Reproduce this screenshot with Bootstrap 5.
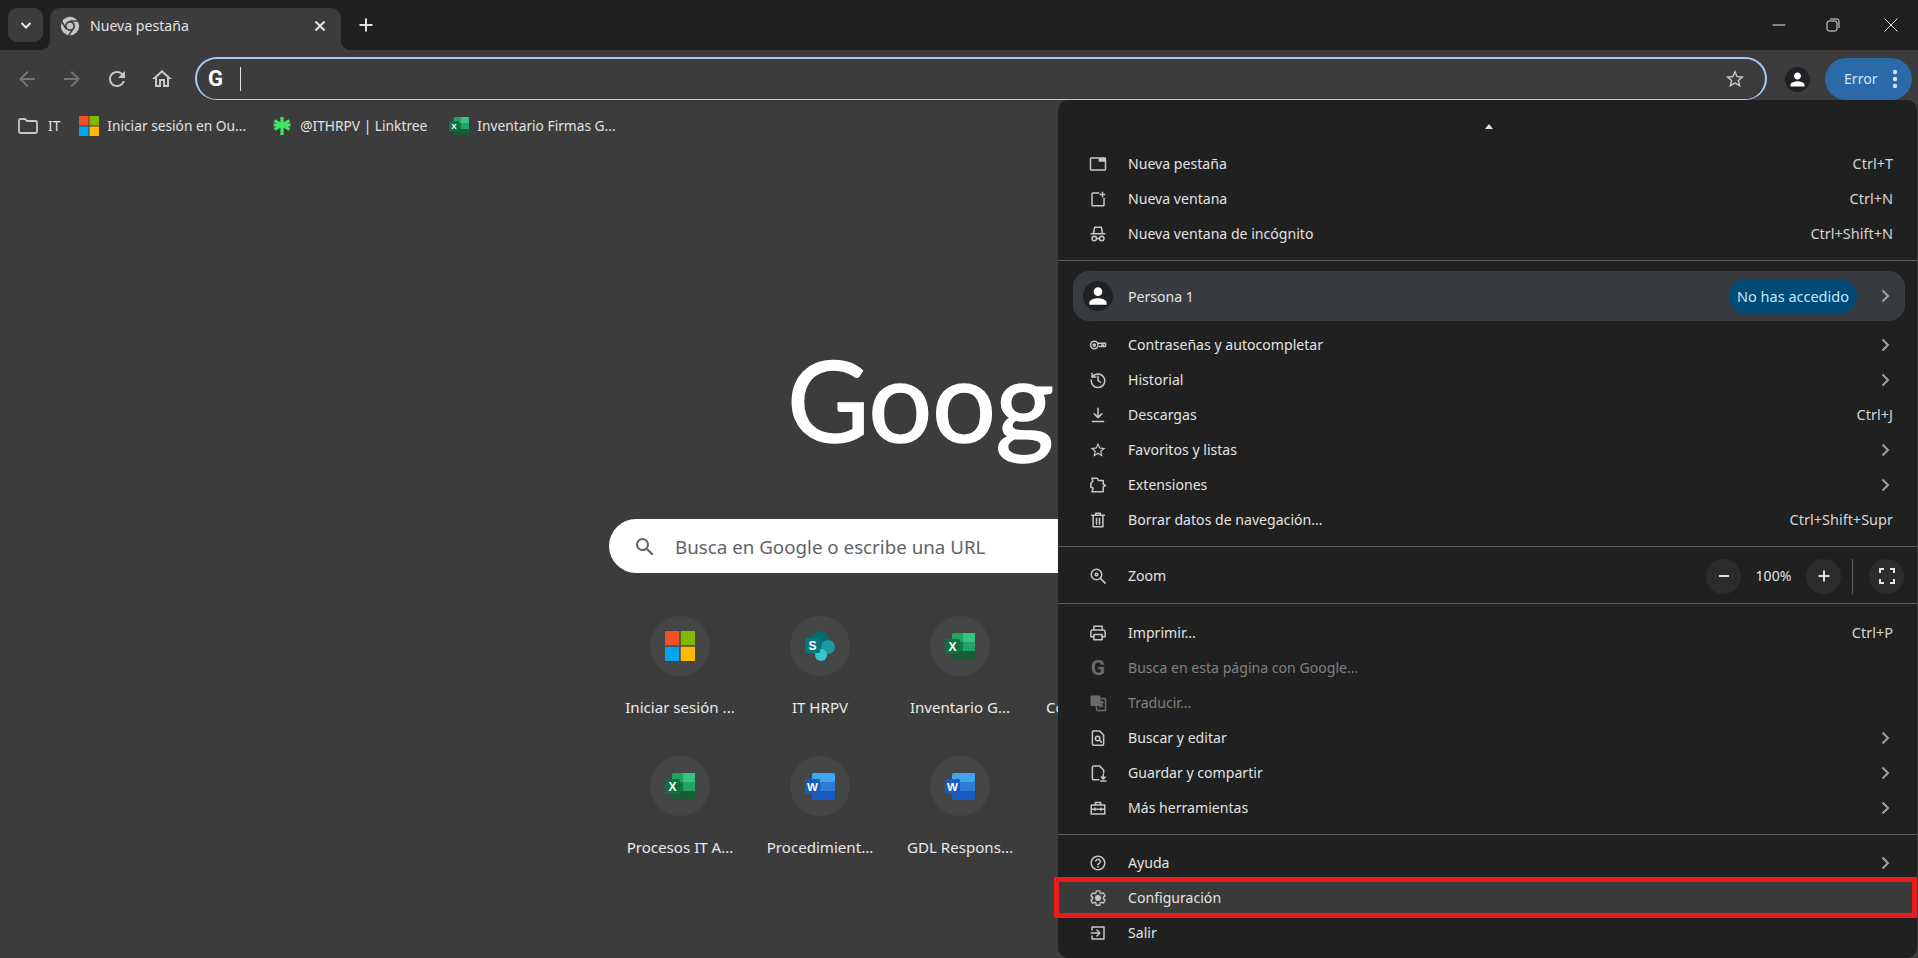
<!DOCTYPE html>
<html lang="es">

<head>
    <meta charset="UTF-8">
    <title>Nueva pestaña</title>
    <link href="https://cdn.jsdelivr.net/npm/bootstrap@5.3.0/dist/css/bootstrap.min.css" rel="stylesheet">
    <style>
        html, body { height: 958px; overflow: hidden; }
        body { background: #3c3c3c; color: #e3e3e3; font-family: "Noto Sans", "Open Sans", sans-serif; font-size: 14.1px; }

        /* window strip */
        .strip { height: 50px; background: #1f2120; }
        .tab-search { width: 35px; height: 34px; margin: 8px 7px 0 8px; background: #3c3c3c; border-radius: 9px; }
        .tab-live { width: 291px; height: 42px; margin-top: 8px; background: #3c3c3c; border-radius: 10px 10px 0 0; padding: 0 14px 7px 10px; }
        .tab-live::before, .tab-live::after { content: ""; position: absolute; bottom: 0; width: 10px; height: 10px; }
        .tab-live::before { left: -10px; background: radial-gradient(circle at 0 0, transparent 10px, #3c3c3c 10.5px); }
        .tab-live::after { right: -10px; background: radial-gradient(circle at 100% 0, transparent 10px, #3c3c3c 10.5px); }
        .tab-title { margin-left: 10px; color: #e3e3e3; }
        .tab-add { margin: 0 0 0 17px; }
        .win-ctl { width: 54px; height: 50px; }
        .win-ctl svg { stroke: #e3e3e3; fill: none; }

        /* toolbar */
        .tool-row { height: 50px; padding: 8px 6px 0 7px; border-radius: 8px 8px 0 0; background: #3c3c3c; }
        .nav-btn { width: 40px; height: 40px; margin-right: 5px; }
        .nav-btn svg { width: 24px; height: 24px; fill: #c7c7c7; }
        .nav-btn.off svg { fill: #757575; }
        .omni { flex: 0 0 1572px; margin-left: 8px; height: 43px; align-self: flex-end; border: 2.5px solid #a8c7fa; border-bottom-width: 1.5px; border-radius: 22px; padding: 0 19px 0 11px; }
        .omni-g { font-family: Roboto, sans-serif; font-weight: 700; font-size: 22px; line-height: 1; color: #fff; width: 20px; }
        .omni-caret { width: 1px; height: 24px; margin-left: 12px; background: #e3e3e3; }
        .omni-star { width: 22px; height: 22px; fill: #c7c7c7; }
        .avatar-dark { width: 25px; height: 25px; background: #202124; }
        .avatar-dark svg { width: 21px; height: 21px; fill: #fff; }
        .avatar-top { margin-left: 18px; }
        .err-chip { width: 87px; height: 42px; margin-left: 15px; align-self: flex-end; background: #2a6aa8; color: #d3e3fd; border-radius: 21px; padding: 0 14px 0 19px; }

        /* bookmarks */
        .mark-row { height: 50px; padding: 2px 0 0 18px; color: #e3e3e3; font-size: 13.75px; }
        .mark-item { margin-right: 22px; gap: 8px; white-space: nowrap; }
        .mark-item svg { width: 20px; height: 20px; flex: none; }
        .mark-item.wide-gap { gap: 10px; margin-right: 19px; }
        .mark-item.push { margin-left: 4px; }

        /* new tab page */
        .ntp { padding-top: 173px; }
        .logo-word { width: 700px; height: 150px; padding-left: 178px; line-height: 150px; font-family: Lato, sans-serif; font-size: 113px; color: #fff; -webkit-text-stroke: 1.5px #fff; letter-spacing: -.5px; }
        .box-search { width: 700px; height: 54px; margin-top: 46px; background: #fff; border-radius: 27px; padding: 2px 0 0 24px; color: #5f6368; font-size: 18.75px; }
        .box-search svg { width: 24px; height: 24px; fill: #5f6368; margin-right: 18px; }
        .tile-grid { width: 700px; margin: 43px 0 0 2px; }
        .tile { width: 140px; height: 140px; }
        .tile-disc { width: 60px; height: 60px; background: #444645; }
        .tile-label { width: 112px; margin-top: 20px; font-size: 15.1px; color: #e8eaed; white-space: nowrap; text-align: center; }
        .tile-label.cut { text-align: left; padding-left: 2px; }

        /* chrome menu */
        .cm-panel { top: 100px; right: 1px; width: 859px; height: 858px; background: #202020; border-radius: 10px; z-index: 5; }
        .cm-top { height: 46px; padding-top: 24px; }
        .cm-arrow { width: 0; height: 0; margin-left: 427px; border-left: 4px solid transparent; border-right: 4px solid transparent; border-bottom: 5px solid #e3e3e3; }
        .cm-row { height: 35px; padding: 0 24px 0 31px; }
        .cm-row > svg:first-child, .cm-glyph { width: 18px; height: 18px; flex: none; margin-right: 21px; }
        .cm-ico { fill: #c7c7c7; }
        .cm-line { fill: none; stroke: #c7c7c7; stroke-width: 2; stroke-linecap: round; stroke-linejoin: round; }
        .cm-line.dim { stroke: #6a6a6a; }
        .cm-name { flex: 1; }
        .cm-key { color: #d5d5d5; font-size: 14.5px; }
        .cm-chev { width: 16px; height: 16px; fill: none; stroke: #a0a0a0; stroke-width: 2; }
        .cm-off { color: #7f8285; }
        .cm-glyph { font-family: Roboto, sans-serif; font-weight: 700; font-size: 21px; line-height: 18px; text-align: center; color: #6a6a6a; }
        .cm-sep { height: 1px; margin: 9px 0 10px; background: #5c5c5c; }
        .cm-sep.tight { margin-bottom: 9px; }
        .cm-sep.zoomed { margin-top: 7px; margin-bottom: 11px; }
        .cm-person { height: 50px; margin: 0 12px 6px 15px; padding: 0 12px 0 10px; background: #383b40; border-radius: 16px; }
        .cm-person .avatar-dark { width: 30px; height: 30px; margin-right: 15px; }
        .cm-person .avatar-dark svg { width: 26px; height: 26px; }
        .cm-person .cm-name { padding-top: 1px; }
        .cm-pill { width: 128px; height: 35px; margin-right: 20px; background: #004a77; color: #c2e7ff; text-align: center; line-height: 35px; font-size: 14.5px; }
        .cm-zoom { height: 40px; padding: 0 13px 0 31px; }
        .cm-zoom > svg:first-child { width: 18px; height: 18px; margin-right: 21px; }
        .cm-round { width: 35px; height: 35px; background: #2c2c2c; }
        .cm-round svg { width: 20px; height: 20px; fill: none; stroke: #e3e3e3; stroke-width: 2; }
        .cm-pct { width: 65px; text-align: center; }
        .cm-vbar { width: 1px; height: 35px; margin: 0 16px 0 11px; background: #5c5c5c; }
        .cm-hot { background: #3a3a38; }
        .red-frame { top: -3px; bottom: -3px; left: -4px; right: 0; border: 5px solid #e81c1c; pointer-events: none; }
    </style>
</head>

<body class="position-relative">
    <svg class="d-none">
        <symbol id="i-person" viewBox="0 0 24 24"><path d="M12 12c2.21 0 4-1.79 4-4s-1.79-4-4-4-4 1.79-4 4 1.79 4 4 4zm0 2c-2.67 0-8 1.34-8 4v2h16v-2c0-2.66-5.33-4-8-4z" /></symbol>
        <symbol id="i-star" viewBox="0 0 24 24"><path d="M22 9.24l-7.19-.62L12 2 9.19 8.63 2 9.24l5.46 4.73L5.82 21 12 17.27 18.18 21l-1.63-7.03L22 9.24zM12 15.4l-3.76 2.27 1-4.28-3.32-2.88 4.38-.38L12 6.1l1.71 4.04 4.38.38-3.32 2.88 1 4.28L12 15.4z" /></symbol>
        <symbol id="i-chev" viewBox="0 0 16 16"><path d="M5.5 2.5 11 8l-5.5 5.5" /></symbol>
        <symbol id="i-ms" viewBox="0 0 20 20">
            <rect width="9.5" height="9.5" fill="#f25022" /><rect x="10.5" width="9.5" height="9.5" fill="#7fba00" />
            <rect y="10.5" width="9.5" height="9.5" fill="#00a4ef" /><rect x="10.5" y="10.5" width="9.5" height="9.5" fill="#ffb900" />
        </symbol>
        <symbol id="i-excel" viewBox="0 0 30 27">
            <rect x="7" width="23" height="27" rx="1.5" fill="#185c37" /><rect x="7" width="23" height="9" rx="1.5" fill="#21a366" />
            <rect x="18" width="12" height="9" fill="#33c481" /><rect x="7" y="9" width="23" height="9" fill="#107c41" />
            <rect x="18" y="9" width="12" height="9" fill="#21a366" />
            <rect y="6" width="15" height="15" rx="1.5" fill="#0f7040" />
            <text x="7.5" y="18" font-family="Liberation Sans" font-size="12" font-weight="700" fill="#fff" text-anchor="middle">X</text>
        </symbol>
        <symbol id="i-word" viewBox="0 0 30 27">
            <rect x="7" width="23" height="27" rx="1.5" fill="#103f91" /><rect x="7" width="23" height="9" rx="1.5" fill="#41a5ee" />
            <rect x="7" y="9" width="23" height="9" fill="#2b7cd3" /><rect x="7" y="18" width="23" height="9" fill="#185abd" />
            <rect y="6" width="15" height="15" rx="1.5" fill="#185abd" />
            <text x="7.5" y="18" font-family="Liberation Sans" font-size="11.5" font-weight="700" fill="#fff" text-anchor="middle">W</text>
        </symbol>
        <symbol id="i-tab" viewBox="0 0 24 24"><path d="M21 3H3c-1.1 0-2 .9-2 2v14c0 1.1.9 2 2 2h18c1.1 0 2-.9 2-2V5c0-1.1-.9-2-2-2zm0 16H3V5h10v4h8v10z" /></symbol>
        <symbol id="i-window" viewBox="0 0 24 24"><path d="M13 4H5a1 1 0 0 0-1 1v15a1 1 0 0 0 1 1h14a1 1 0 0 0 1-1v-9" /><path d="M18 3v6M15 6h6" /></symbol>
        <symbol id="i-incognito" viewBox="0 0 24 24"><path d="M3 11.5h18M6 11l1.500-8h9l1.500 8" /><circle cx="7" cy="18" r="3" /><circle cx="17" cy="18" r="3" /><path d="M10 18h4" /></symbol>
        <symbol id="i-key" viewBox="0 0 24 24"><circle cx="7" cy="12" r="5" /><circle cx="7" cy="12" r="1.500" /><path d="M12 9.500h10v4.500h-3v-2h-2v2h-3" /></symbol>
        <symbol id="i-history" viewBox="0 0 24 24"><path d="M4 3v5h5" /><path d="M4.500 8A9 9 0 1 1 3 12" /><path d="M12 7v5.500l3.500 2.500" /></symbol>
        <symbol id="i-download" viewBox="0 0 24 24"><path d="M12 3v12M7 10.500l5 5 5-5M4.500 20.500h15" /></symbol>
        <symbol id="i-puzzle" viewBox="0 0 24 24"><path d="M5 7l-1-4h7l1.500 3H19v5l3 1.500-3 2V21H4l1.500-5-3-1V10z" /></symbol>
        <symbol id="i-trash" viewBox="0 0 24 24"><path d="M3.500 5.500h17M9 5.500V3h6v2.500M5.500 5.500V21h13V5.500M10 9.500v8M14 9.500v8" /></symbol>
        <symbol id="i-zoom" viewBox="0 0 24 24"><circle cx="10" cy="10" r="7" /><circle cx="10" cy="10" r="1.800" /><path d="M15.500 15.500 21.500 21.500" /></symbol>
        <symbol id="i-print" viewBox="0 0 24 24"><path d="M6.500 8V3h11v5M6.500 17H2.500v-6.500a2.500 2.500 0 0 1 2.500-2.500h14a2.500 2.500 0 0 1 2.500 2.500V17h-4" /><path d="M6.500 14h11v7h-11z" /></symbol>
        <symbol id="i-translate" viewBox="0 0 24 24"><rect x="2" y="2" width="13" height="14" rx="1.500" fill="#6a6a6a" stroke="none" /><path d="M9 6h12a1 1 0 0 1 1 1v15H11l-1.500-5" /><path d="M13 11h6M16 9v2M18 11c-.5 3-2 5-4 6M14 12c.5 2 2.500 4 4.500 4.500" /></symbol>
        <symbol id="i-find" viewBox="0 0 24 24"><path d="M14 2.500H6a1.500 1.500 0 0 0-1.500 1.500v16A1.500 1.500 0 0 0 6 21.500h12a1.500 1.500 0 0 0 1.500-1.500V8z" /><circle cx="11.500" cy="12.500" r="3" /><path d="M14 15l2.500 2.500" /></symbol>
        <symbol id="i-save" viewBox="0 0 24 24"><path d="M13 21H6a1.500 1.500 0 0 1-1.500-1.500V4A1.500 1.500 0 0 1 6 2.500h8L19.500 8v4" /><path d="M19 14v6M16.500 17.500 19 20l2.500-2.500M15.500 22.500h7" /></symbol>
        <symbol id="i-tools" viewBox="0 0 24 24"><path d="M3 8h18v12H3zM8.500 8V4.500h7V8M3 13.500h18M8 12v3M16 12v3" /></symbol>
        <symbol id="i-help" viewBox="0 0 24 24"><path d="M11 18h2v-2h-2v2zm1-16C6.480 2 2 6.480 2 12s4.480 10 10 10 10-4.480 10-10S17.520 2 12 2zm0 18c-4.410 0-8-3.590-8-8s3.590-8 8-8 8 3.590 8 8-3.590 8-8 8zm0-14c-2.210 0-4 1.790-4 4h2c0-1.100.9-2 2-2s2 .9 2 2c0 2-3 1.750-3 5h2c0-2.250 3-2.500 3-5 0-2.210-1.790-4-4-4z" /></symbol>
        <symbol id="i-gear" viewBox="0 0 24 24"><path stroke-width="1.800" d="M19.140 12.940c.04-.3.06-.61.06-.94 0-.32-.02-.64-.07-.94l2.030-1.580c.18-.14.23-.41.12-.61l-1.920-3.320c-.12-.22-.37-.29-.59-.22l-2.390.96c-.5-.38-1.030-.7-1.620-.94l-.36-2.540c-.04-.24-.24-.41-.48-.41h-3.840c-.24 0-.43.17-.47.41l-.36 2.540c-.59.24-1.130.57-1.620.94l-2.390-.96c-.22-.08-.47 0-.59.22L2.740 8.870c-.12.21-.08.47.12.61l2.030 1.580c-.05.3-.09.63-.09.94s.02.64.07.94l-2.030 1.580c-.18.14-.23.41-.12.61l1.920 3.320c.12.22.37.29.59.22l2.390-.96c.5.38 1.030.7 1.620.94l.36 2.540c.05.24.24.41.48.41h3.840c.24 0 .44-.17.47-.41l.36-2.540c.59-.24 1.130-.56 1.620-.94l2.390.96c.22.08.47 0 .59-.22l1.920-3.320c.12-.22.07-.47-.12-.61l-2.010-1.580z" /><circle cx="12" cy="12" r="3" fill="#c7c7c7" /></symbol>
        <symbol id="i-exit" viewBox="0 0 24 24"><path d="M4 8V4h16v16H4v-4M3 12h11M10.500 8l4 4-4 4" /></symbol>
    </svg>

    <!-- window strip with the tab -->
    <div class="strip d-flex">
        <div class="tab-search d-flex align-items-center justify-content-center">
            <svg width="14" height="14" viewBox="0 0 14 14" fill="none" stroke="#e3e3e3" stroke-width="2"><path d="M2.500 5 7 9.500 11.500 5" /></svg>
        </div>
        <div class="tab-live position-relative d-flex align-items-center">
            <svg width="20" height="20" viewBox="0 0 24 24">
                <circle cx="12" cy="12" r="11" fill="#c4c7c5" />
                <circle cx="12" cy="12" r="6" fill="#3c3c3c" />
                <circle cx="12" cy="12" r="4" fill="#c4c7c5" />
                <path d="M12 6h10M7 15 2 6.500M15.500 16 10.500 23" stroke="#3c3c3c" stroke-width="1.800" fill="none" />
            </svg>
            <span class="tab-title flex-grow-1">Nueva pestaña</span>
            <svg width="14" height="14" viewBox="0 0 14 14" stroke="#e3e3e3" stroke-width="2"><path d="M2.500 2.500l9 9M11.500 2.500l-9 9" /></svg>
        </div>
        <svg class="tab-add align-self-center" width="16" height="16" viewBox="0 0 16 16" stroke="#e3e3e3" stroke-width="2"><path d="M8 1.500v13M1.500 8h13" /></svg>
        <div class="ms-auto d-flex">
            <div class="win-ctl d-flex align-items-center justify-content-center"><svg width="14" height="14" viewBox="0 0 14 14"><path d="M0.500 7h13" /></svg></div>
            <div class="win-ctl me-1 d-flex align-items-center justify-content-center"><svg width="14" height="14" viewBox="0 0 14 14"><rect x="1" y="3" width="10" height="10" rx="2" /><path d="M4 1h7a2 2 0 0 1 2 2v7" /></svg></div>
            <div class="win-ctl d-flex align-items-center justify-content-center"><svg width="14" height="14" viewBox="0 0 14 14"><path d="M.5.500l13 13M13.500.500l-13 13" /></svg></div>
        </div>
    </div>

    <!-- toolbar -->
    <div class="tool-row d-flex align-items-center">
        <div class="nav-btn off d-flex align-items-center justify-content-center"><svg viewBox="0 0 24 24"><path d="M20 11H7.830l5.590-5.590L12 4l-8 8 8 8 1.410-1.410L7.830 13H20v-2z" /></svg></div>
        <div class="nav-btn off d-flex align-items-center justify-content-center"><svg viewBox="0 0 24 24"><path d="M12 4l-1.410 1.410L16.170 11H4v2h12.170l-5.580 5.590L12 20l8-8z" /></svg></div>
        <div class="nav-btn d-flex align-items-center justify-content-center"><svg viewBox="0 0 24 24"><path d="M17.650 6.350A7.958 7.958 0 0 0 12 4c-4.420 0-7.990 3.580-7.990 8s3.570 8 7.990 8c3.730 0 6.840-2.550 7.730-6h-2.080A5.990 5.990 0 0 1 12 18c-3.310 0-6-2.690-6-6s2.690-6 6-6c1.660 0 3.140.69 4.220 1.780L13 11h7V4l-2.350 2.350z" /></svg></div>
        <div class="nav-btn d-flex align-items-center justify-content-center"><svg viewBox="0 0 24 24"><path d="M12 5.690l5 4.500V18h-2v-6H9v6H7v-7.810l5-4.500M12 3 2 12h3v8h6v-6h2v6h6v-8h3L12 3z" /></svg></div>
        <div class="omni d-flex align-items-center">
            <span class="omni-g">G</span>
            <span class="omni-caret"></span>
            <svg class="omni-star ms-auto"><use href="#i-star" /></svg>
        </div>
        <div class="avatar-dark avatar-top rounded-circle d-flex align-items-center justify-content-center"><svg><use href="#i-person" /></svg></div>
        <div class="err-chip d-flex align-items-center justify-content-between">
            <span>Error</span>
            <svg width="6" height="20" viewBox="0 0 6 20" fill="#d3e3fd"><circle cx="3" cy="3" r="2.200" /><circle cx="3" cy="10" r="2.200" /><circle cx="3" cy="17" r="2.200" /></svg>
        </div>
    </div>

    <!-- bookmarks -->
    <div class="mark-row d-flex align-items-center">
        <div class="mark-item wide-gap d-flex align-items-center">
            <svg viewBox="0 0 20 20" fill="none" stroke="#c7c7c7" stroke-width="1.800"><path d="M1 4.500A1.500 1.500 0 0 1 2.500 3H7l2 2h8.500A1.500 1.500 0 0 1 19 6.500v9a1.500 1.500 0 0 1-1.500 1.500h-15A1.500 1.500 0 0 1 1 15.500z" /></svg>
            <span>IT</span>
        </div>
        <div class="mark-item d-flex align-items-center"><svg><use href="#i-ms" /></svg><span>Iniciar sesión en Ou...</span></div>
        <div class="mark-item push d-flex align-items-center">
            <svg viewBox="0 0 20 20" stroke="#43e660" stroke-width="3.200"><path d="M10 1v18M2.500 4.500l15 9M17.500 4.500l-15 9M1.500 9h17" /></svg>
            <span>@ITHRPV | Linktree</span>
        </div>
        <div class="mark-item d-flex align-items-center"><svg><use href="#i-excel" /></svg><span>Inventario Firmas G...</span></div>
    </div>

    <!-- new tab page -->
    <div class="ntp d-flex flex-column align-items-center">
        <div class="logo-word">Goog</div>
        <div class="box-search d-flex align-items-center">
            <svg viewBox="0 0 24 24"><path d="M15.500 14h-.79l-.28-.27A6.471 6.471 0 0 0 16 9.500 6.500 6.500 0 1 0 9.500 16c1.610 0 3.090-.59 4.230-1.570l.27.28v.79l5 4.990L20.490 19l-4.990-5zm-6 0C7.010 14 5 11.990 5 9.500S7.010 5 9.500 5 14 7.010 14 9.500 11.990 14 9.500 14z" /></svg>
            <span>Busca en Google o escribe una URL</span>
        </div>
        <div class="tile-grid d-flex flex-wrap">
            <div class="tile d-flex flex-column align-items-center">
                <div class="tile-disc rounded-circle d-flex align-items-center justify-content-center"><svg width="30" height="30"><use href="#i-ms" /></svg></div>
                <div class="tile-label">Iniciar sesión ...</div>
            </div>
            <div class="tile d-flex flex-column align-items-center">
                <div class="tile-disc rounded-circle d-flex align-items-center justify-content-center">
                    <svg width="30" height="30" viewBox="0 0 30 30">
                        <circle cx="15" cy="9" r="9" fill="#036c70" /><circle cx="23" cy="16" r="7" fill="#1a9ba1" /><circle cx="16" cy="24" r="6" fill="#37c6d0" />
                        <rect y="7" width="15" height="15" rx="1.500" fill="#03787c" />
                        <text x="7.500" y="19" font-family="Liberation Sans" font-size="12" font-weight="700" fill="#fff" text-anchor="middle">S</text>
                    </svg>
                </div>
                <div class="tile-label">IT HRPV</div>
            </div>
            <div class="tile d-flex flex-column align-items-center">
                <div class="tile-disc rounded-circle d-flex align-items-center justify-content-center"><svg width="30" height="27"><use href="#i-excel" /></svg></div>
                <div class="tile-label">Inventario G...</div>
            </div>
            <div class="tile d-flex flex-column align-items-center">
                <div class="tile-disc rounded-circle"></div>
                <div class="tile-label cut">Co</div>
            </div>
            <div class="tile"></div>
            <div class="tile d-flex flex-column align-items-center">
                <div class="tile-disc rounded-circle d-flex align-items-center justify-content-center"><svg width="30" height="27"><use href="#i-excel" /></svg></div>
                <div class="tile-label">Procesos IT A...</div>
            </div>
            <div class="tile d-flex flex-column align-items-center">
                <div class="tile-disc rounded-circle d-flex align-items-center justify-content-center"><svg width="30" height="27"><use href="#i-word" /></svg></div>
                <div class="tile-label">Procedimient...</div>
            </div>
            <div class="tile d-flex flex-column align-items-center">
                <div class="tile-disc rounded-circle d-flex align-items-center justify-content-center"><svg width="30" height="27"><use href="#i-word" /></svg></div>
                <div class="tile-label">GDL Respons...</div>
            </div>
        </div>
    </div>

    <!-- chrome menu -->
    <div class="cm-panel position-absolute">
        <div class="cm-top"><div class="cm-arrow"></div></div>
        <div class="cm-row d-flex align-items-center"><svg class="cm-ico"><use href="#i-tab" /></svg><span class="cm-name">Nueva pestaña</span><span class="cm-key">Ctrl+T</span></div>
        <div class="cm-row d-flex align-items-center"><svg class="cm-line"><use href="#i-window" /></svg><span class="cm-name">Nueva ventana</span><span class="cm-key">Ctrl+N</span></div>
        <div class="cm-row d-flex align-items-center"><svg class="cm-line"><use href="#i-incognito" /></svg><span class="cm-name">Nueva ventana de incógnito</span><span class="cm-key">Ctrl+Shift+N</span></div>
        <div class="cm-sep"></div>
        <div class="cm-person d-flex align-items-center">
            <div class="avatar-dark rounded-circle d-flex align-items-center justify-content-center"><svg><use href="#i-person" /></svg></div>
            <span class="cm-name">Persona 1</span>
            <span class="cm-pill rounded-pill">No has accedido</span>
            <svg class="cm-chev"><use href="#i-chev" /></svg>
        </div>
        <div class="cm-row d-flex align-items-center"><svg class="cm-line"><use href="#i-key" /></svg><span class="cm-name">Contraseñas y autocompletar</span><svg class="cm-chev"><use href="#i-chev" /></svg></div>
        <div class="cm-row d-flex align-items-center"><svg class="cm-line"><use href="#i-history" /></svg><span class="cm-name">Historial</span><svg class="cm-chev"><use href="#i-chev" /></svg></div>
        <div class="cm-row d-flex align-items-center"><svg class="cm-line"><use href="#i-download" /></svg><span class="cm-name">Descargas</span><span class="cm-key">Ctrl+J</span></div>
        <div class="cm-row d-flex align-items-center"><svg class="cm-ico"><use href="#i-star" /></svg><span class="cm-name">Favoritos y listas</span><svg class="cm-chev"><use href="#i-chev" /></svg></div>
        <div class="cm-row d-flex align-items-center"><svg class="cm-line"><use href="#i-puzzle" /></svg><span class="cm-name">Extensiones</span><svg class="cm-chev"><use href="#i-chev" /></svg></div>
        <div class="cm-row d-flex align-items-center"><svg class="cm-line"><use href="#i-trash" /></svg><span class="cm-name">Borrar datos de navegación...</span><span class="cm-key">Ctrl+Shift+Supr</span></div>
        <div class="cm-sep tight"></div>
        <div class="cm-zoom d-flex align-items-center">
            <svg class="cm-line"><use href="#i-zoom" /></svg>
            <span class="cm-name">Zoom</span>
            <div class="cm-round rounded-circle d-flex align-items-center justify-content-center"><svg viewBox="0 0 20 20"><path d="M5 10h10" /></svg></div>
            <span class="cm-pct">100%</span>
            <div class="cm-round rounded-circle d-flex align-items-center justify-content-center"><svg viewBox="0 0 20 20"><path d="M10 4.500v11M4.500 10h11" /></svg></div>
            <div class="cm-vbar"></div>
            <div class="cm-round rounded-circle d-flex align-items-center justify-content-center"><svg viewBox="0 0 20 20"><path d="M3 7V3h4M13 3h4v4M17 13v4h-4M7 17H3v-4" /></svg></div>
        </div>
        <div class="cm-sep zoomed"></div>
        <div class="cm-row d-flex align-items-center"><svg class="cm-line"><use href="#i-print" /></svg><span class="cm-name">Imprimir...</span><span class="cm-key">Ctrl+P</span></div>
        <div class="cm-row cm-off d-flex align-items-center"><span class="cm-glyph">G</span><span class="cm-name">Busca en esta página con Google...</span></div>
        <div class="cm-row cm-off d-flex align-items-center"><svg class="cm-line dim"><use href="#i-translate" /></svg><span class="cm-name">Traducir...</span></div>
        <div class="cm-row d-flex align-items-center"><svg class="cm-line"><use href="#i-find" /></svg><span class="cm-name">Buscar y editar</span><svg class="cm-chev"><use href="#i-chev" /></svg></div>
        <div class="cm-row d-flex align-items-center"><svg class="cm-line"><use href="#i-save" /></svg><span class="cm-name">Guardar y compartir</span><svg class="cm-chev"><use href="#i-chev" /></svg></div>
        <div class="cm-row d-flex align-items-center"><svg class="cm-line"><use href="#i-tools" /></svg><span class="cm-name">Más herramientas</span><svg class="cm-chev"><use href="#i-chev" /></svg></div>
        <div class="cm-sep"></div>
        <div class="cm-row d-flex align-items-center"><svg class="cm-ico"><use href="#i-help" /></svg><span class="cm-name">Ayuda</span><svg class="cm-chev"><use href="#i-chev" /></svg></div>
        <div class="cm-row cm-hot position-relative d-flex align-items-center">
            <svg class="cm-line"><use href="#i-gear" /></svg><span class="cm-name">Configuración</span>
            <div class="red-frame position-absolute"></div>
        </div>
        <div class="cm-row d-flex align-items-center"><svg class="cm-line"><use href="#i-exit" /></svg><span class="cm-name">Salir</span></div>
    </div>

    <script src="https://cdn.jsdelivr.net/npm/bootstrap@5.3.0/dist/js/bootstrap.bundle.min.js"></script>
</body>

</html>
